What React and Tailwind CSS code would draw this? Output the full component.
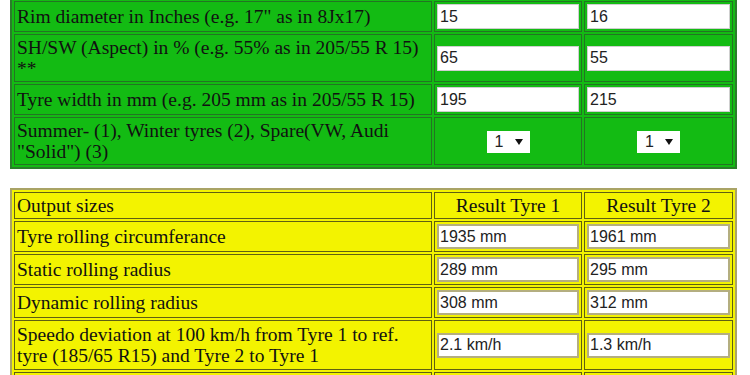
import React from "react";

const inputRows = [
  { label: "Rim diameter in Inches (e.g. 17\" as in 8Jx17)", a: "15", b: "16" },
  { label: "SH/SW (Aspect) in % (e.g. 55% as in 205/55 R 15) **", a: "65", b: "55" },
  { label: "Tyre width in mm (e.g. 205 mm as in 205/55 R 15)", a: "195", b: "215" },
];

const outputRows = [
  { label: "Tyre rolling circumferance", a: "1935 mm", b: "1961 mm" },
  { label: "Static rolling radius", a: "289 mm", b: "295 mm" },
  { label: "Dynamic rolling radius", a: "308 mm", b: "312 mm" },
  {
    label: "Speedo deviation at 100 km/h from Tyre 1 to ref. tyre (185/65 R15) and Tyre 2 to Tyre 1",
    a: "2.1 km/h",
    b: "1.3 km/h",
  },
  { label: "Speed difference at 100 km/h", a: "", b: "" },
];

const FakeSelect = () => (
  <span className="inline-flex h-[22px] w-[43px] items-center justify-between bg-white pl-[8px] pr-[7px] font-['Liberation_Sans',Arial,sans-serif] text-[16px] leading-none text-[#222]">
    1
    <svg width="8" height="6" viewBox="0 0 8 6">
      <path d="M0 0 L8 0 L4 6 Z" fill="#111" />
    </svg>
  </span>
);

const GreenInput = ({ value }) => (
  <input
    readOnly
    value={value}
    className="block h-[25px] w-full border border-[#cfcfcf] bg-white px-[2px] font-['Liberation_Sans',Arial,sans-serif] text-[16px] text-[#222] outline-none"
  />
);

const YellowInput = ({ value }) => (
  <input
    readOnly
    value={value}
    className="block h-[25px] w-full border-2 border-[#b4ae80] bg-white px-[1px] font-['Liberation_Sans',Arial,sans-serif] text-[16px] text-[#222] outline-none"
  />
);

export default function App() {
  return (
    <div className="min-h-screen bg-white pl-[10px] font-['Liberation_Serif','Times_New_Roman',serif] text-[19.5px] leading-[21px] text-[#111]">
      {/* Input sizes */}
      <table className="-mt-[3px] w-[727px] table-fixed border-separate border-spacing-[2px] border-2 border-[#2b7d2b] bg-[#13bb13]">
        <colgroup>
          <col className="w-[418px]" />
          <col className="w-[148px]" />
          <col className="w-[149px]" />
        </colgroup>
        <tbody>
          {inputRows.map((r) => (
            <tr key={r.label}>
              <td className="border border-[#237423] px-[2px] py-[2px] align-middle">{r.label}</td>
              <td className="border border-[#237423] px-[2px] py-[2px] align-middle">
                <GreenInput value={r.a} />
              </td>
              <td className="border border-[#237423] px-[2px] py-[2px] align-middle">
                <GreenInput value={r.b} />
              </td>
            </tr>
          ))}
          <tr>
            <td className="border border-[#237423] px-[2px] py-[2px] align-middle">
              Summer- (1), Winter tyres (2), Spare(VW, Audi "Solid") (3)
            </td>
            <td className="border border-[#237423] px-[2px] py-[2px] text-center align-middle">
              <FakeSelect />
            </td>
            <td className="border border-[#237423] px-[2px] py-[2px] text-center align-middle">
              <FakeSelect />
            </td>
          </tr>
        </tbody>
      </table>

      {/* Results */}
      <table className="mt-[19px] w-[727px] table-fixed border-separate border-spacing-[2px] border-2 border-[#a9a366] bg-[#f3f300]">
        <colgroup>
          <col className="w-[418px]" />
          <col className="w-[148px]" />
          <col className="w-[149px]" />
        </colgroup>
        <tbody>
          <tr>
            <td className="border border-[#5f5f12] px-[2px] py-[2px]">Output sizes</td>
            <td className="border border-[#5f5f12] px-[2px] py-[2px] text-center">Result Tyre 1</td>
            <td className="border border-[#5f5f12] px-[2px] py-[2px] text-center">Result Tyre 2</td>
          </tr>
          {outputRows.map((r) => (
            <tr key={r.label}>
              <td className="border border-[#5f5f12] px-[2px] py-[3px] align-middle">{r.label}</td>
              <td className="border border-[#5f5f12] px-[2px] py-[2px] align-middle">
                <YellowInput value={r.a} />
              </td>
              <td className="border border-[#5f5f12] px-[2px] py-[2px] align-middle">
                <YellowInput value={r.b} />
              </td>
            </tr>
          ))}
        </tbody>
      </table>
    </div>
  );
}
